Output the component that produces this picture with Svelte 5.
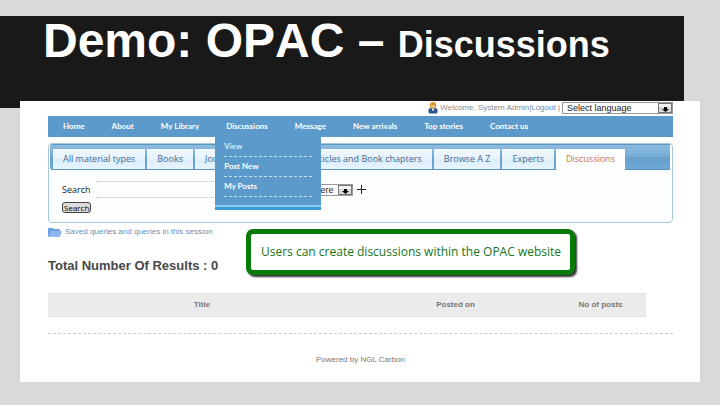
<script>
    const navItems = ["Home", "About", "My Library", "Discussions", "Message", "New arrivals", "Top stories", "Contact us"];
    const subItems = ["View", "Post New", "My Posts"];
    const tabs = ["All material types", "Books", "Journals", "Articles and Book chapters", "Browse A Z", "Experts", "Discussions"];

    let activeTab = $state("Discussions");
    let query = $state("");
</script>

{#snippet arrow()}
    <svg class="arrow" viewBox="0 0 14 10" preserveAspectRatio="none" aria-hidden="true">
        <rect x="0.5" y="0.5" width="13" height="9" fill="#d8d8d8" stroke="#777" />
        <path d="M1 1h12v3H1z" fill="#f4f4f4" />
        <path d="M6 4h3v2h2L7.500 9L4 6h2z" fill="#000" />
    </svg>
{/snippet}

<header class="banner">
    <h1>Demo: OPAC – <span>Discussions</span></h1>
</header>

<main class="card">
    <div class="userbar">
        <svg class="user" viewBox="0 0 10 12" aria-hidden="true">
            <path d="M0.500 7q4.500-3 9 0v3q0 1.500-1.500 1.500h-6Q0.500 11.500 0.500 10z" fill="#2f5590" />
            <path d="M3.500 5h3L5.500 9h-1z" fill="#e6ecf5" />
            <circle cx="5" cy="3.2" r="3.2" fill="#d99a35" />
            <path d="M3 3q2 1.500 4 0v1.500q-2 2-4 0z" fill="#f2cf94" />
        </svg>
        <span>Welcome, System Admin|<a href="#logout">Logout</a> |</span>
        <label class="picker language">
            <select aria-label="Language">
                <option>Select language</option>
            </select>
            {@render arrow()}
        </label>
    </div>

    <nav class="nav">
        {#each navItems as item}
            <div class="nav-item">
                <a href="#nav">{item}</a>
                {#if item === "Discussions"}
                    <div class="submenu">
                        {#each subItems as sub, index}
                            <a href="#sub" class:current={index === 0}>{sub}</a>
                        {/each}
                    </div>
                {/if}
            </div>
        {/each}
    </nav>

    <section class="panel">
        <div class="tabs">
            {#each tabs as tab}
                <button
                    class="tab"
                    class:wide={tab === "Journals"}
                    class:active={activeTab === tab}
                    onclick={() => activeTab = tab}
                >{tab}</button>
            {/each}
        </div>
        <form class="search" onsubmit={(e) => e.preventDefault()}>
            <div class="search-row">
                <label for="query">Search</label>
                <input id="query" type="text" bind:value={query}>
                <label class="picker field">
                    <select aria-label="Field">
                        <option>Anywhere</option>
                    </select>
                    {@render arrow()}
                </label>
                <button type="button" class="add" aria-label="Add row">
                    <svg viewBox="0 0 9 9" aria-hidden="true"><path d="M4.500 0v9M0 4.500h9" stroke="#222" /></svg>
                </button>
            </div>
            <button class="submit">Search</button>
        </form>
    </section>

    <div class="saved-row">
        <a class="saved" href="#saved">
            <svg viewBox="0 0 14 10" aria-hidden="true">
                <path d="M0 1h5l1 1h6v8H1L0 9z" fill="#6d9fe3" />
                <path d="M3 4h11l-2 6H1z" fill="#8fb8f2" />
            </svg>
            Saved queries and queries in this session
        </a>
        <div class="callout">Users can create discussions within the OPAC website</div>
    </div>

    <h2>Total Number Of Results : 0</h2>

    <table>
        <thead>
            <tr>
                <th class="title">Title</th>
                <th class="posted">Posted on</th>
                <th>No of posts</th>
            </tr>
        </thead>
    </table>

    <footer>Powered by NGL Carbon</footer>
</main>

<style>
    :global(body) {
        background: #d9d9d9;
        font-family: "Liberation Sans", Arial, sans-serif;
    }

    a {
        text-decoration: none;
    }

    svg {
        display: block;
        flex: none;
    }

    .banner {
        box-sizing: border-box;
        height: 92px;
        margin: 16px 36px 0 0;
        padding-left: 43px;
        background: #191919;
    }

    h1 {
        margin: 0;
        color: #fff;
        font-size: 48px;
        line-height: 50px;
        font-kerning: none;
        white-space: nowrap;
    }

    h1 span {
        font-size: 36px;
    }

    .card {
        box-sizing: border-box;
        margin: -7px 20px 0;
        padding: 0 27px 17px 28px;
        background: #fff;
    }

    .userbar {
        display: flex;
        justify-content: flex-end;
        align-items: center;
        height: 13px;
        margin-bottom: 2px;
        font-size: 8px;
        color: #8a8a8a;
        white-space: nowrap;
    }

    .userbar a {
        color: #5b8fc0;
    }

    .user {
        width: 10px;
        height: 12px;
        margin-right: 2px;
    }

    .picker {
        position: relative;
        display: block;
        height: 12px;
    }

    .picker select {
        appearance: none;
        box-sizing: border-box;
        width: 100%;
        height: 12px;
        margin: 0;
        padding: 0 4px;
        border: 1px solid #999;
        border-radius: 0;
        background: #fff;
        color: #222;
        font: 9px/10px "Liberation Sans", Arial, sans-serif;
        display: block;
    }

    .arrow {
        position: absolute;
        top: 1px;
        right: 1px;
        width: 14px;
        height: 10px;
        pointer-events: none;
    }

    .language {
        width: 111px;
        margin-left: 2px;
    }

    .nav {
        display: flex;
        gap: 27px;
        height: 21px;
        padding-left: 15px;
        background: #5b9aca;
        font: bold 8px/21px Lato, sans-serif;
    }

    .nav-item {
        position: relative;
        white-space: nowrap;
    }

    .nav a {
        color: #fff;
    }

    .submenu {
        position: absolute;
        z-index: 2;
        top: 21px;
        left: -11px;
        box-sizing: border-box;
        width: 106px;
        height: 73px;
        padding: 0 9px;
        background: #5b9aca;
        border-bottom: 3px solid #3a9bd3;
        box-shadow: inset 0 -2px #8bcdf5;
    }

    .submenu a {
        display: block;
        height: 19px;
        line-height: 19px;
        border-bottom: 1px dashed #c5def0;
    }

    .submenu .current {
        color: #d8eaf8;
    }

    .panel {
        margin-top: 6px;
        padding: 0 2px 9px 1px;
        border: 1px solid #a9c6da;
        border-radius: 4px;
        background: #fdfefe;
    }

    .tabs {
        display: flex;
        align-items: stretch;
        gap: 2px;
        box-sizing: border-box;
        height: 26px;
        padding: 4px 3px 0;
        border-top: 1px solid #5a97c5;
        border-bottom: 1px solid #5a93bd;
        border-radius: 3px 0 0 3px;
        background: linear-gradient(#8dbadc, #75add6 50%, #659fcd 50%, #6fa8d3);
    }

    .tab {
        margin: 0;
        padding: 0 10px;
        border: 0;
        background: linear-gradient(#f0f7fd, #e7f3fc 50%, #dcedfa 50%, #e6f4fd);
        color: #426a90;
        font: 9px/20px "Open Sans", sans-serif;
        white-space: nowrap;
    }

    .tab.wide {
        width: 103px;
        text-align: left;
    }

    .tab.active {
        margin-bottom: -1px;
        padding-bottom: 1px;
        background: #fdfefe;
        color: #cf7040;
    }

    .search {
        padding: 11px 12px 0;
        color: #222;
        font: 9px/16px "Open Sans", sans-serif;
    }

    .search-row {
        display: flex;
        align-items: center;
    }

    .search-row input {
        box-sizing: border-box;
        width: 172px;
        height: 17px;
        margin: 0 5px;
        padding: 0 4px;
        border: 1px dotted #bbb;
        border-width: 1px 0;
        background: none;
    }

    .field {
        width: 80px;
    }

    .field select {
        padding-left: 20px;
    }

    .add {
        margin: 0 0 0 4px;
        padding: 0;
        border: 0;
        background: none;
    }

    .add svg {
        width: 9px;
        height: 9px;
    }

    .submit {
        display: block;
        margin: 4px 0 0;
        padding: 0 1px;
        border: 1px solid #444;
        border-radius: 3px;
        background: #ddd;
        color: #000;
        font: 8px/9px "Open Sans", sans-serif;
    }

    .saved-row {
        display: flex;
        align-items: flex-start;
        height: 31px;
        padding-top: 4px;
    }

    .saved {
        display: flex;
        align-items: center;
        gap: 3px;
        width: 198px;
        color: #6b8fb5;
        font-size: 8px;
        line-height: 10px;
        white-space: nowrap;
    }

    .saved svg {
        width: 14px;
        height: 10px;
    }

    .callout {
        position: relative;
        margin-top: 2px;
        padding: 0 9px 0 10px;
        border: 5px solid #087a08;
        border-radius: 7px;
        background: #fff;
        box-shadow: 2px 2px 2px #333;
        color: #187518;
        font: 12px/36px "Open Sans", sans-serif;
        white-space: nowrap;
    }

    h2 {
        margin: 0;
        color: #484848;
        font-size: 13px;
        line-height: 16px;
    }

    table {
        width: calc(100% - 27px);
        margin-top: 19px;
        border-collapse: collapse;
        table-layout: fixed;
    }

    th {
        height: 22px;
        padding: 0;
        border: 1px solid #e0e0e0;
        border-width: 1px 0;
        background: #ebebeb;
        color: #777;
        font-size: 8px;
        line-height: 10px;
    }

    .title {
        width: 308px;
    }

    .posted {
        width: 199px;
    }

    footer {
        margin-top: 16px;
        padding-top: 21px;
        border-top: 1px dashed #ccc;
        color: #777;
        font-size: 8px;
        line-height: 10px;
        text-align: center;
    }
</style>
